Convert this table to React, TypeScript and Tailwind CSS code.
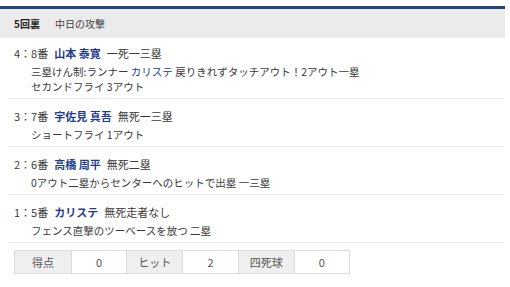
import React from "react";

type Play = {
  no: string;
  order: string;
  name: string;
  runners: string;
  lines: React.ReactNode[];
};

const Blue = ({ children }: { children: React.ReactNode }) => (
  <span className="text-[#1f3d8f]">{children}</span>
);

const plays: Play[] = [
  {
    no: "4",
    order: "8番",
    name: "山本 泰寛",
    runners: "一死一三塁",
    lines: [
      <>
        三塁けん制:ランナー <Blue>カリステ</Blue> 戻りきれずタッチアウト！2アウト一塁
      </>,
      <>セカンドフライ 3アウト</>,
    ],
  },
  {
    no: "3",
    order: "7番",
    name: "宇佐見 真吾",
    runners: "無死一三塁",
    lines: [<>ショートフライ 1アウト</>],
  },
  {
    no: "2",
    order: "6番",
    name: "高橋 周平",
    runners: "無死二塁",
    lines: [<>0アウト二塁からセンターへのヒットで出塁 一三塁</>],
  },
  {
    no: "1",
    order: "5番",
    name: "カリステ",
    runners: "無死走者なし",
    lines: [<>フェンス直撃のツーベースを放つ 二塁</>],
  },
];

const stats = [
  { label: "得点", value: "0" },
  { label: "ヒット", value: "2" },
  { label: "四死球", value: "0" },
];

export default function App() {
  return (
    <div
      className="w-[510px] h-[287px] bg-white text-[#3a3a3a] overflow-hidden"
      style={{ fontFamily: '"Noto Sans CJK JP", "Noto Sans", sans-serif' }}
    >
      <div className="pt-[6px] w-[505px]">
        <div className="h-[3px] bg-[#1b4676]" />
        <div className="h-[29px] bg-[#ebebeb] flex items-center pl-[14px] text-[10px]">
          <span className="font-bold text-[#222]">5回裏</span>
          <span className="ml-[15px] text-[#444]">中日の攻撃</span>
        </div>
      </div>

      <div className="w-[496px] ml-[8px]">
        {plays.map((p, i) => (
          <div
            key={p.no}
            className={`border-b border-[#e6e6e6] ${i === 0 ? "pt-[6px] pb-[4px]" : "pt-[8px] pb-[5px]"}`}
          >
            <div className="h-[18px] flex items-center pl-[6px] text-[11px] leading-none">
              <span>{p.no}：{p.order}</span>
              <span className="ml-[6px] font-bold text-[#1f3d8f]">{p.name}</span>
              <span className="ml-[6px]">{p.runners}</span>
            </div>
            <div className="mt-[2px] pl-[23px] text-[10.5px] leading-[15px]">
              {p.lines.map((l, j) => (
                <div key={j} className={p.lines.length > 1 ? "h-[15px]" : "h-[14px]"}>
                  {l}
                </div>
              ))}
            </div>
          </div>
        ))}
      </div>

      <div className="mt-[7px] ml-[14px] flex w-[336px] h-[24px] border border-[#dcdcdc] text-[11px] text-[#555]">
        {stats.map((s, i) => (
          <React.Fragment key={s.label}>
            <div
              className={`w-[56px] flex items-center justify-center bg-[#efefef] ${i > 0 ? "border-l border-[#dcdcdc]" : ""}`}
            >
              {s.label}
            </div>
            <div className="flex-1 flex items-center justify-center bg-white border-l border-[#dcdcdc]">
              {s.value}
            </div>
          </React.Fragment>
        ))}
      </div>
    </div>
  );
}
